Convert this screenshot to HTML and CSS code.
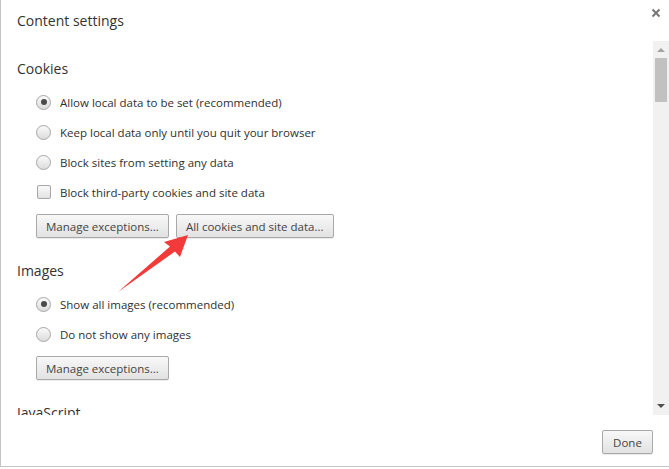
FILE: index.html
```html
<!DOCTYPE html>
<html lang="en">
<head>
  <meta charset="UTF-8">
  <title>Content settings</title>
  <link rel="stylesheet" href="styles.css">
</head>
<body>
  <div class="dialog">
    <div class="dlg-head">
      <h1 class="dlg-title">Content settings</h1>
      <svg class="close-x" width="10" height="10" viewBox="0 0 10 10">
        <path d="M1.5 1.5 L8.5 8.5 M8.5 1.5 L1.5 8.5" stroke="#767676" stroke-width="2"/>
      </svg>
    </div>

    <div class="dlg-middle">
      <div class="scroll-area">
        <h2 class="sec-head">Cookies</h2>
        <div class="opt-row"><span class="radio on"></span>Allow local data to be set (recommended)</div>
        <div class="opt-row"><span class="radio"></span>Keep local data only until you quit your browser</div>
        <div class="opt-row"><span class="radio"></span>Block sites from setting any data</div>
        <div class="opt-row"><span class="check"></span>Block third-party cookies and site data</div>
        <div class="btn-row">
          <button class="btn">Manage exceptions...</button>
          <button class="btn">All cookies and site data...</button>
        </div>

        <h2 class="sec-head">Images</h2>
        <div class="opt-row"><span class="radio on"></span>Show all images (recommended)</div>
        <div class="opt-row"><span class="radio"></span>Do not show any images</div>
        <div class="btn-row">
          <button class="btn">Manage exceptions...</button>
        </div>

        <h2 class="sec-head">JavaScript</h2>
      </div>
      <div class="scrollbar">
        <span class="arr up"></span>
        <span class="thumb"></span>
        <span class="track-fill"></span>
        <span class="arr down"></span>
      </div>
    </div>

    <div class="dlg-foot">
      <button class="btn done">Done</button>
    </div>

    <svg class="pointer" width="669" height="469" viewBox="0 0 669 469">
      <polygon points="188,235 164,242 170,246.5 118,292 175,251.5 180,257" fill="#f23a3a"/>
    </svg>
  </div>
</body>
</html>
```

FILE: styles.css
```css
body {
  margin: 0;
  font-family: 'Open Sans', 'Noto Sans', sans-serif;
  font-size: 11.5px;
  color: #303030;
  background: #fff;
}

.dialog {
  position: relative;
  width: 668px;
  height: 466px;
  border-left: 1px solid #c4c4c4;
  border-bottom: 1px solid #c4c4c4;
  background: #fff;
  display: flex;
  flex-direction: column;
}

.dlg-head {
  height: 41px;
  display: flex;
  align-items: flex-start;
  justify-content: space-between;
}

.dlg-title {
  margin: 11px 0 0 16px;
  font-size: 14px;
  font-weight: normal;
  line-height: 20px;
  color: #333;
}

.close-x {
  margin: 8px 8px 0 0;
}

.dlg-middle {
  height: 374px;
  display: flex;
}

.scroll-area {
  flex: 1;
  overflow: hidden;
  padding: 18px 0 0 16px;
}

.sec-head {
  margin: 0 0 8px;
  font-size: 14px;
  font-weight: normal;
  line-height: 20px;
  color: #333;
}

.opt-row {
  height: 30px;
  display: flex;
  align-items: center;
  padding-left: 19px;
}

.radio {
  width: 13px;
  height: 13px;
  margin-right: 9px;
  border: 1px solid #a6a6a6;
  border-radius: 50%;
  background: linear-gradient(#fafafa, #dcdcdc);
  display: flex;
  align-items: center;
  justify-content: center;
  flex-shrink: 0;
}

.radio.on::after {
  content: '';
  width: 6px;
  height: 6px;
  border-radius: 50%;
  background: #4a4a4a;
}

.check {
  width: 12px;
  height: 12px;
  margin: 0 9px 0 1px;
  border: 1px solid #a6a6a6;
  border-radius: 2px;
  background: linear-gradient(#fafafa, #e2e2e2);
  flex-shrink: 0;
}

.btn-row {
  display: flex;
  gap: 7px;
  margin: 7px 0 23px 19px;
}

.btn {
  height: 24px;
  padding: 0 9px;
  font-family: inherit;
  font-size: 11.5px;
  color: #444;
  border: 1px solid #a9a9a9;
  border-radius: 2px;
  background: linear-gradient(#f8f8f8, #e2e2e2);
  box-shadow: 0 1px 0 rgba(0,0,0,0.08);
}

.scrollbar {
  width: 16px;
  background: #f1f1f1;
  display: flex;
  flex-direction: column;
  align-items: center;
}

.arr {
  width: 0;
  height: 0;
  border-left: 4px solid transparent;
  border-right: 4px solid transparent;
}

.arr.up {
  margin-top: 7px;
  border-bottom: 4px solid #a3a3a3;
}

.arr.down {
  margin-bottom: 7px;
  border-top: 4px solid #505050;
}

.thumb {
  width: 12px;
  height: 44px;
  margin-top: 6px;
  background: #c1c1c1;
}

.track-fill {
  flex: 1;
}

.dlg-foot {
  flex: 1;
  display: flex;
  justify-content: flex-end;
  padding: 15px 16px 0 0;
}

.btn.done {
  width: 51px;
  height: 24px;
  padding: 0;
}

.pointer {
  position: absolute;
  left: -1px;
  top: 0;
  pointer-events: none;
}
```
